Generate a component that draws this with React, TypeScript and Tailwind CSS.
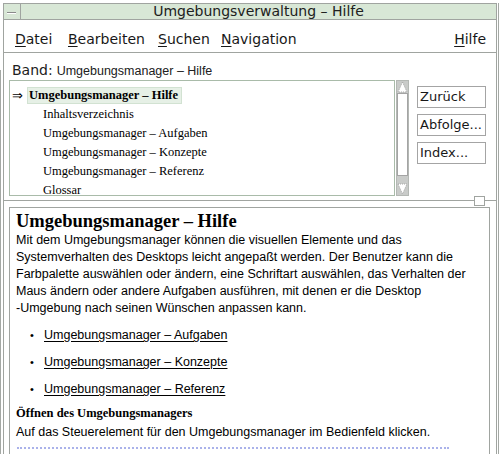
import React from "react";

const sans = "font-['Liberation_Sans',Arial,sans-serif]";
const serif = "font-['Liberation_Serif','Times_New_Roman',serif]";

function Arrow({ up }: { up: boolean }) {
  return (
    <div className="h-[12px] w-full flex items-center justify-center">
      <svg width="11" height="12" viewBox="0 0 11 12">
        {up ? (
          <polygon points="5.5,1 10,11 1,11" fill="#ffffff" stroke="#a8a8a8" strokeWidth="1" strokeDasharray="1 1" />
        ) : (
          <polygon points="1,1 10,1 5.5,11" fill="#ffffff" stroke="#a8a8a8" strokeWidth="1" strokeDasharray="1 1" />
        )}
      </svg>
    </div>
  );
}

function Mn({ c }: { c: string }) {
  return <span className="underline underline-offset-[2px] decoration-1">{c}</span>;
}

export default function App() {
  const items = [
    "Inhaltsverzeichnis",
    "Umgebungsmanager – Aufgaben",
    "Umgebungsmanager – Konzepte",
    "Umgebungsmanager – Referenz",
    "Glossar",
  ];
  const links = [
    "Umgebungsmanager – Aufgaben",
    "Umgebungsmanager – Konzepte",
    "Umgebungsmanager – Referenz",
  ];
  return (
    <div className="w-[500px] h-[454px] overflow-hidden bg-white flex text-black font-['DejaVu_Sans',sans-serif]">
      {/* left frame strip */}
      <div className="w-[3px] h-full flex flex-col shrink-0">
        <div className="h-[70px]" />
        <div className="flex-1 border-l border-[#a4a8a4]" />
      </div>

      {/* window */}
      <div className="w-[494px] shrink-0 mt-[3px] border-l border-r border-t border-[#a0a4a0] flex flex-col min-w-0">
        {/* title bar */}
        <div className="h-[16px] shrink-0 flex border-b border-[#a0a4a0] bg-[#d8e7d6]">
          <div className="w-[17px] h-full border-r border-[#a0a4a0] pt-[8px] pl-[3px]">
            <div className="w-[9px] h-[2px] border-t border-[#8a8a8a] border-b border-b-white" />
          </div>
          <div className="flex-1 text-center text-[14px] leading-[15px] text-[#202020]">
            Umgebungsverwaltung – Hilfe
          </div>
        </div>

        {/* menu bar */}
        <div className="h-[33px] shrink-0 flex border-b border-[#a0a4a0] pt-[11px] pl-[11px] pr-[10px] text-[14px] leading-[16px] text-[#181818]">
          <span className="w-[53px]"><Mn c="D" />atei</span>
          <span className="w-[90px]"><Mn c="B" />earbeiten</span>
          <span className="w-[63px]"><Mn c="S" />uchen</span>
          <span><Mn c="N" />avigation</span>
          <span className="ml-auto"><Mn c="H" />ilfe</span>
        </div>

        {/* Band row */}
        <div className="h-[27px] shrink-0 flex items-baseline pt-[9px] pl-[8px]">
          <span className="text-[14px] leading-[16px] text-[#202020]">Band:</span>
          <span className={`${sans} text-[12.5px] ml-[4px] text-[#202020]`}>Umgebungsmanager – Hilfe</span>
        </div>

        {/* upper area */}
        <div className="h-[116px] shrink-0 flex pl-[5px]">
          <div className="w-[386px] h-full border border-[#a9bba9] bg-white overflow-hidden pt-[5px]">
            <div className={`${serif} text-[12.5px]`}>
              <div className="h-[19px] flex items-center pl-[2px]">
                <span className="w-[15px] text-[13px] leading-[13px] font-['DejaVu_Sans',sans-serif]">⇒</span>
                <span className="h-[17px] flex items-center border border-[#d2e2d2] bg-[#e6f0e6] pl-[1px] pr-[3px] font-bold">
                  Umgebungsmanager – Hilfe
                </span>
              </div>
              {items.map((t) => (
                <div key={t} className="h-[19px] flex items-center pl-[33px]">
                  {t}
                </div>
              ))}
            </div>
          </div>
          <div className="ml-[1px] w-[13px] h-full flex flex-col bg-[#c9cbc9] border border-[#b4b8b4]">
            <Arrow up />
            <div className="h-[83px] bg-white border border-[#a4a4a4]" />
            <div className="flex-1" />
            <Arrow up={false} />
          </div>
          <div className="ml-[8px] flex flex-col gap-[6px] pt-[6px]">
            {["Zurück", "Abfolge...", "Index..."].map((b) => (
              <div
                key={b}
                className="w-[69px] h-[22px] border border-[#a4a4a4] bg-white text-[13px] leading-[20px] pl-[2px] text-[#181818] whitespace-nowrap overflow-hidden"
              >
                {b}
              </div>
            ))}
          </div>
        </div>

        {/* sash */}
        <div className="h-[11px] shrink-0 relative">
          <div className="mt-[4px] h-[1px] bg-[#a0a4a0]" />
          <div className="absolute left-[470px] top-0 w-[11px] h-[10px] border border-[#a0a4a0] bg-white" />
        </div>

        {/* content pane */}
        <div className="ml-[5px] w-[481px] flex-1 border border-[#a0a4a0] border-b-0 overflow-hidden pt-[2px] pl-[6px]">
          <div className={`${serif} font-bold text-[18.5px] leading-[22px]`}>Umgebungsmanager – Hilfe</div>
          <p className={`${sans} text-[12.5px] leading-[17px] whitespace-nowrap`}>
            Mit dem Umgebungsmanager können die visuellen Elemente und das
            <br />
            Systemverhalten des Desktops leicht angepaßt werden. Der Benutzer kann die
            <br />
            Farbpalette auswählen oder ändern, eine Schriftart auswählen, das Verhalten der
            <br />
            Maus ändern oder andere Aufgaben ausführen, mit denen er die Desktop
            <br />
            -Umgebung nach seinen Wünschen anpassen kann.
          </p>
          <div className="mt-[10px] flex flex-col gap-[10px]">
            {links.map((l) => (
              <div key={l} className={`${sans} text-[12.5px] leading-[17px] flex`}>
                <span className="w-[28px] pl-[14px] text-[11px]">•</span>
                <span className="underline underline-offset-[2px]">{l}</span>
              </div>
            ))}
          </div>
          <div className={`${serif} font-bold text-[12.5px] leading-[17px] mt-[7px]`}>Öffnen des Umgebungsmanagers</div>
          <div className={`${sans} text-[12.5px] leading-[17px] mt-[2px]`}>
            Auf das Steuerelement für den Umgebungsmanager im Bedienfeld klicken.
          </div>
          <div className="mt-[6px] ml-[1px] w-[432px] h-[2px] border-t-2 border-dotted border-[#aab2ea]" />
        </div>
      </div>

      {/* right frame strip */}
      <div className="w-[3px] h-full shrink-0 pt-[3px]">
        <div className="ml-[1px] h-full border-l border-[#a4a8a4]" />
      </div>
    </div>
  );
}
